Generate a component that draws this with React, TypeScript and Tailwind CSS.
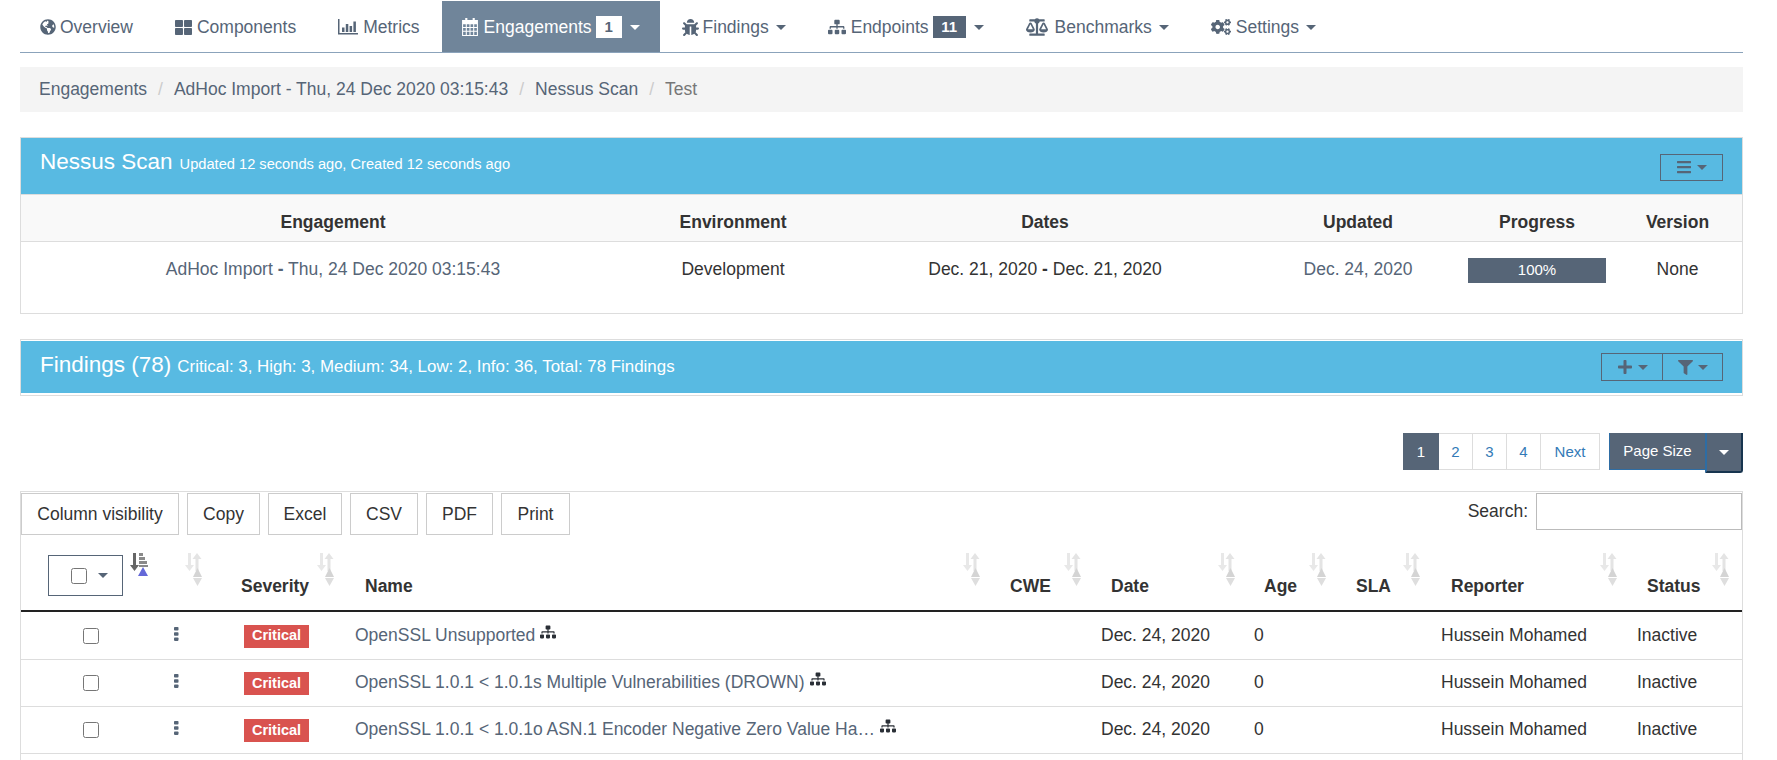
import React from 'react';
import {
  FaBalanceScale,
  FaBars,
  FaBug,
  FaCogs,
  FaFilter,
  FaGlobeAmericas,
  FaPlus,
  FaSitemap,
  FaThLarge,
} from 'react-icons/fa';

const Caret = ({ className = '' }: { className?: string }) => (
  <span
    className={`inline-block w-0 h-0 border-x-[5px] border-t-[5px] border-x-transparent border-t-current align-middle ${className}`}
  />
);

const MetricsIcon = () => (
  <svg width="20" height="16" viewBox="0 0 20 16" fill="currentColor">
    <path d="M0 0h1.500v14H20v1.500H0z" />
    <path d="M4 8.500h2.500V13H4zM7.800 5h2.500v8H7.800zM11.600 7h2.500v6h-2.500zM15.400 2.500h2.500V13h-2.500z" />
  </svg>
);

const CalendarIcon = () => (
  <svg width="16" height="18" viewBox="0 0 15 17" fill="#fff">
    <path d="M3 0h2v3H3zM10 0h2v3h-2z" />
    <path
      fillRule="evenodd"
      d="M0 2h15v15H0zM1 6v2.5h2.5V6zM4.5 6v2.5H7V6zM8 6v2.5h2.5V6zM11.500 6v2.5H14V6zM1 9.500V12h2.500V9.500zM4.500 9.500V12H7V9.500zM8 9.500V12h2.500V9.500zM11.500 9.500V12H14V9.500zM1 13v3h2.500v-3zM4.500 13v3H7v-3zM8 13v3h2.500v-3zM11.500 13v3H14v-3z"
    />
  </svg>
);

const DotsIcon = () => (
  <svg width="5" height="14" viewBox="0 0 5 14" fill="currentColor" className="-mt-[3px]">
    <rect x="0" y="0" width="4.500" height="3.500" rx="0.8" />
    <rect x="0" y="5.200" width="4.500" height="3.500" rx="0.8" />
    <rect x="0" y="10.400" width="4.500" height="3.500" rx="0.8" />
  </svg>
);

const SortIcon = ({ active = false }: { active?: boolean }) => (
  <svg width="18" height="34" viewBox="0 0 18 34" className="absolute top-[19px] right-[12px]">
    {active ? (
      <>
        <path d="M3 0h3v12h3l-4.500 6L0 12h3z" fill="#666" />
        <path d="M9 0h4v3H9zM9 4h6v3H9zM9 8h8v3H9zM9 12h9v2H9z" fill="#8a8a8a" />
        <path d="M13 14l5 9H8z" fill="#6468d8" />
      </>
    ) : (
      <>
        <path d="M3 0h3v12h3l-4.500 6L0 12h3z" fill="#e8e8e8" />
        <path d="M12 0l4.500 6h-3v12h-3V6h-3z" fill="#e4e4e4" />
        <path d="M12.500 15l4.500 9H8z" fill="#d4d4d4" />
        <path d="M8 25h9l-4.500 8z" fill="#dedede" />
      </>
    )}
  </svg>
);

const NavItem = ({
  icon,
  slot,
  label,
  badge,
  caret,
  active,
}: {
  icon: React.ReactNode;
  slot: string;
  label: string;
  badge?: string;
  caret?: boolean;
  active?: boolean;
}) => (
  <li
    className={`flex items-center h-[51px] pt-px px-5 mr-0.5 ${active ? 'bg-[#70859a] text-white' : 'text-[#566577]'}`}
  >
    <span className={`flex items-center shrink-0 ${slot}`}>{icon}</span>
    <span>{label}</span>
    {badge && (
      <span
        className={`ml-[4px] flex items-center justify-center h-[22px] text-[15px] font-bold ${
          active ? 'w-[26px] bg-white text-[#566577]' : 'w-[33px] bg-[#566577] text-white'
        }`}
      >
        {badge}
      </span>
    )}
    {caret && <Caret className={badge ? 'ml-[8px]' : 'ml-[7px]'} />}
  </li>
);

const PanelButton = ({ icon, className = '' }: { icon: React.ReactNode; className?: string }) => (
  <span className={`flex items-center justify-center gap-[5px] h-full border border-[#566577] text-[#566577] ${className}`}>
    {icon}
    <Caret className="border-x-[4px] border-t-[4px]" />
  </span>
);

const findings = [
  { name: 'OpenSSL Unsupported', height: 'h-[48px]' },
  { name: 'OpenSSL 1.0.1 < 1.0.1s Multiple Vulnerabilities (DROWN)', height: 'h-[47px]' },
  { name: 'OpenSSL 1.0.1 < 1.0.1o ASN.1 Encoder Negative Zero Value Ha…', height: 'h-[47px]' },
];

const columns = [
  { label: 'Severity', width: 'w-[132px]', pad: 'pl-[26px]' },
  { label: 'Name', width: 'w-[646px]', pad: 'pl-[18px]' },
  { label: 'CWE', width: 'w-[101px]', pad: 'pl-[17px]' },
  { label: 'Date', width: 'w-[154px]', pad: 'pl-[17px]' },
  { label: 'Age', width: 'w-[91px]', pad: 'pl-[16px]' },
  { label: 'SLA', width: 'w-[94px]', pad: 'pl-[17px]' },
  { label: 'Reporter', width: 'w-[197px]', pad: 'pl-[18px]' },
  { label: 'Status', width: 'w-[112px]', pad: 'pl-[17px]' },
];

export default function App() {
  return (
    <div className="h-[760px] overflow-hidden bg-white font-['Liberation_Sans',Arial,sans-serif] text-[17.5px] text-[#333]">
      <div className="ml-5 w-[1723px]">
        {/* Tabs */}
        <ul className="flex pt-px h-[53px] border-b border-[#8ba3bb]">
          <NavItem icon={<FaGlobeAmericas size={16} />} slot="w-[20px]" label="Overview" />
          <NavItem icon={<FaThLarge size={17} />} slot="w-[22px]" label="Components" />
          <NavItem icon={<MetricsIcon />} slot="w-[25px]" label="Metrics" />
          <NavItem icon={<CalendarIcon />} slot="w-[22px]" label="Engagements" badge="1" caret active />
          <NavItem icon={<FaBug size={17} />} slot="w-[21px]" label="Findings" caret />
          <NavItem icon={<FaSitemap size={18} />} slot="w-[23px]" label="Endpoints" badge="11" caret />
          <NavItem icon={<FaBalanceScale size={22} />} slot="w-[29px]" label="Benchmarks" caret />
          <NavItem icon={<FaCogs size={20} />} slot="w-[25px]" label="Settings" caret />
        </ul>

        {/* Breadcrumb */}
        <div className="mt-[14px] flex items-center h-[45px] px-[19px] bg-[#f4f4f4] text-[#566577]">
          <span>Engagements</span>
          <span className="px-[11px] text-[#ccc]">/</span>
          <span>AdHoc Import - Thu, 24 Dec 2020 03:15:43</span>
          <span className="px-[11px] text-[#ccc]">/</span>
          <span>Nessus Scan</span>
          <span className="px-[11px] text-[#ccc]">/</span>
          <span className="text-[#777]">Test</span>
        </div>

        {/* Test panel */}
        <div className="mt-[25px] border border-[#ddd] h-[177px]">
          <div className="flex items-center justify-between h-[56px] px-[19px] bg-[#58bae2] text-white">
            <div className="flex items-baseline -mt-[8px]">
              <span className="text-[22.5px]">Nessus Scan</span>
              <span className="ml-[7px] text-[14.65px]">Updated 12 seconds ago, Created 12 seconds ago</span>
            </div>
            <div className="h-[27px] w-[63px] mt-[2px]">
              <PanelButton icon={<FaBars size={16} />} />
            </div>
          </div>
          <table className="w-full table-fixed border-t border-[#ddd]">
            <thead>
              <tr className="h-[47px] bg-[#f9f9f9] border-b border-[#ddd] font-bold">
                <th className="w-[624px] pt-[14px] pb-[5px]">Engagement</th>
                <th className="w-[176px] pt-[14px] pb-[5px]">Environment</th>
                <th className="w-[448px] pt-[14px] pb-[5px]">Dates</th>
                <th className="w-[178px] pt-[14px] pb-[5px]">Updated</th>
                <th className="w-[180px] pt-[14px] pb-[5px]">Progress</th>
                <th className="pt-[14px] pb-[5px] pr-[14px]">Version</th>
              </tr>
            </thead>
            <tbody>
              <tr className="text-center">
                <td className="pt-[14px] align-top text-[#566577]">
                  AdHoc Import <b>-</b> Thu, 24 Dec 2020 03:15:43
                </td>
                <td className="pt-[14px] align-top">Development</td>
                <td className="pt-[14px] align-top">
                  Dec. 21, 2020 <b>-</b> Dec. 21, 2020
                </td>
                <td className="pt-[14px] align-top text-[#566577]">Dec. 24, 2020</td>
                <td className="pt-[16px] align-top">
                  <div className="mx-auto flex items-center justify-center w-[138px] h-[25px] bg-[#566577] text-[15px] text-white">
                    100%
                  </div>
                </td>
                <td className="pt-[14px] align-top pr-[14px]">None</td>
              </tr>
            </tbody>
          </table>
        </div>

        {/* Findings panel */}
        <div className="mt-[25px] border border-[#ddd] h-[57px] pt-px">
          <div className="flex items-center justify-between h-[52px] px-[19px] bg-[#58bae2] text-white">
            <div className="flex items-baseline -mt-[4px]">
              <span className="text-[22.5px]">Findings (78)</span>
              <span className="ml-[6px] text-[16.9px]">
                Critical: 3, High: 3, Medium: 34, Low: 2, Info: 36, Total: 78 Findings
              </span>
            </div>
            <div className="flex h-[28px] w-[122px]">
              <PanelButton icon={<FaPlus size={16} />} className="w-[62px]" />
              <PanelButton icon={<FaFilter size={15} />} className="w-[60px] border-l-0" />
            </div>
          </div>
        </div>

        {/* Pagination */}
        <div className="mt-[37px] flex justify-end h-[40px] text-[15px]">
          <div className="flex h-[37px]">
            <span className="flex items-center justify-center w-[36px] pt-px bg-[#566577] text-white">1</span>
            {['2', '3', '4'].map((page) => (
              <span
                key={page}
                className="flex items-center justify-center w-[34px] pt-px border border-l-0 border-[#ddd] text-[#337ab7]"
              >
                {page}
              </span>
            ))}
            <span className="flex items-center justify-center w-[59px] pt-px border border-l-0 border-[#ddd] text-[#337ab7]">
              Next
            </span>
          </div>
          <div className="ml-[9px] flex items-start">
            <span className="flex items-center justify-center w-[96px] h-[37px] pt-px bg-[#566577] border-b border-l border-[#2e6da4] text-white">
              Page Size
            </span>
            <span className="flex items-center justify-center w-[38px] h-[40px] bg-[#566577] border-l-2 border-b-2 border-r-2 border-l-[#2e6da4] border-b-[#17344f] border-r-[#17344f] rounded-br-[3px] text-white">
              <Caret />
            </span>
          </div>
        </div>

        {/* Findings table */}
        <div className="mt-[18px] border-t border-x border-[#ddd] h-[269px]">
          <div className="flex items-start justify-between h-[42px] pt-px">
            <div className="flex gap-[8px]">
              {[
                { label: 'Column visibility', width: 'w-[158px]' },
                { label: 'Copy', width: 'w-[73px]' },
                { label: 'Excel', width: 'w-[74px]' },
                { label: 'CSV', width: 'w-[68px]' },
                { label: 'PDF', width: 'w-[67px]' },
                { label: 'Print', width: 'w-[69px]' },
              ].map((btn) => (
                <span
                  key={btn.label}
                  className={`flex items-center justify-center h-[42px] border border-[#ccc] ${btn.width}`}
                >
                  {btn.label}
                </span>
              ))}
            </div>
            <div className="flex items-center">
              <span>Search:</span>
              <input
                readOnly
                className="ml-[8px] w-[206px] h-[37px] border border-[#bbb] bg-white"
              />
            </div>
          </div>
          <table className="w-[1721px] table-fixed">
            <thead>
              <tr className="h-[77px] border-b-2 border-[#222]">
                <th className="relative w-[139px] align-bottom text-left pb-[14px] pl-[27px]">
                  <span className="flex items-center gap-[11px] pl-[22px] w-[75px] h-[41px] border border-[#566577] text-[#566577]">
                    <input type="checkbox" readOnly className="w-4 h-4" />
                    <Caret className="border-x-[4.5px] border-t-[5px]" />
                  </span>
                  <SortIcon active />
                </th>
                <th className="relative w-[55px]">
                  <SortIcon />
                </th>
                {columns.map((col) => (
                  <th
                    key={col.label}
                    className={`relative align-bottom text-left pb-[11px] ${col.width} ${col.pad}`}
                  >
                    {col.label}
                    <SortIcon />
                  </th>
                ))}
              </tr>
            </thead>
            <tbody>
              {findings.map((f) => (
                <tr key={f.name} className={`border-b border-[#ddd] ${f.height}`}>
                  <td className="text-center">
                    <input type="checkbox" readOnly className="w-4 h-4 align-middle -mt-px" />
                  </td>
                  <td className="pl-[14px] text-[#566577]">
                    <DotsIcon />
                  </td>
                  <td className="pl-[29px]">
                    <span className="mt-[2px] flex items-center justify-center w-[65px] h-[23px] bg-[#d9534f] text-[14.5px] font-bold text-white">
                      Critical
                    </span>
                  </td>
                  <td className="pl-[8px] text-[#566577] whitespace-nowrap">
                    {f.name}
                    <FaSitemap size={16} className="inline-block ml-[5px] -mt-[10px] text-[#2a2f36]" />
                  </td>
                  <td />
                  <td className="pl-[7px]">Dec. 24, 2020</td>
                  <td className="pl-[6px]">0</td>
                  <td />
                  <td className="pl-[8px]">Hussein Mohamed</td>
                  <td className="pl-[7px]">Inactive</td>
                </tr>
              ))}
            </tbody>
          </table>
        </div>
      </div>
    </div>
  );
}
